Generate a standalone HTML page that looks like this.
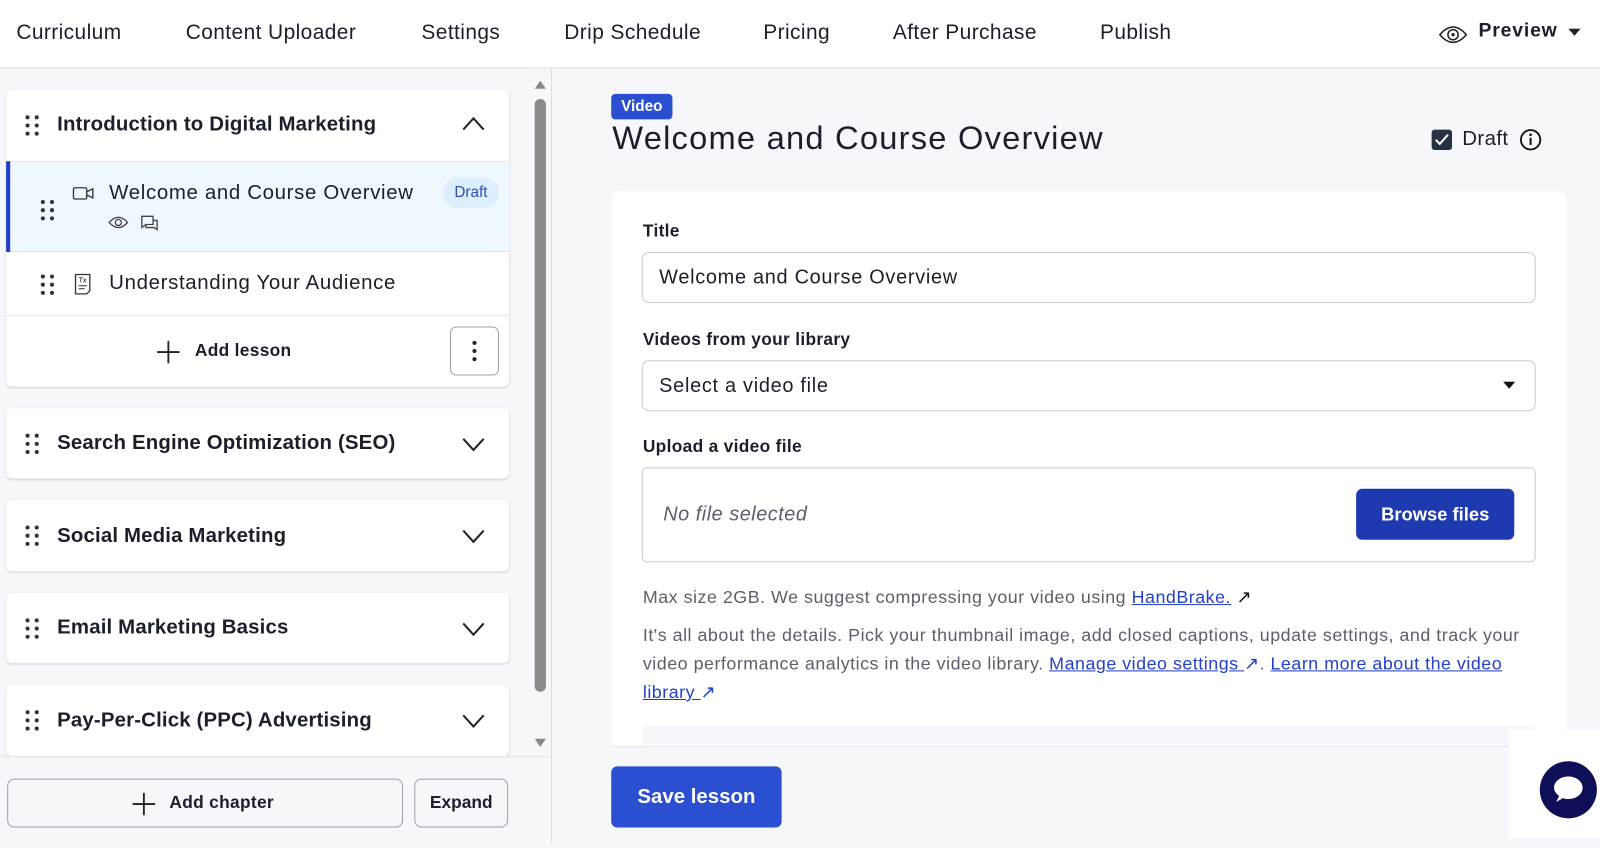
<!DOCTYPE html>
<html><head><meta charset="utf-8"><style>
*{box-sizing:border-box;margin:0;padding:0}
body{width:1600px;height:837px;overflow:hidden;background:#f6f7fb;font-family:"Liberation Sans",sans-serif;color:#1b1f2a;position:relative}
#w{position:absolute;left:0;top:0;width:1568px;height:821px;transform:scale(1.0204);transform-origin:0 0}
.a{position:absolute}
.nav{left:0;top:0;width:1568px;height:67px;background:#fff;border-bottom:1px solid #dcdde2}
.nav span{position:absolute;top:20px;font-size:20.5px;letter-spacing:.4px;color:#1b1f2a}
.card{position:absolute;left:6px;width:493px;background:#fff;border-radius:6px;box-shadow:0 1px 2px rgba(0,0,0,.15)}
.ch{font-size:20px;font-weight:bold;color:#1b1f2a;position:absolute;left:50px;letter-spacing:.15px}
.dots{position:absolute;width:14px;height:20px}
.dots i{position:absolute;width:4px;height:4px;background:#333;border-radius:50%}
.chev{position:absolute;right:24px}
.lbl{position:absolute;font-size:17px;font-weight:bold;color:#1b1f2a;left:30px;letter-spacing:.3px}
.inp{position:absolute;left:29px;width:876px;height:50px;border:1px solid #c9cbd1;border-radius:7px;font-size:19.5px;letter-spacing:.7px;padding:13px 16px;color:#1b1f2a}
.p{position:absolute;left:30px;font-size:17.5px;letter-spacing:.5px;color:#5b5f6b;line-height:28px;width:880px}
.p a{color:#2340c8;text-decoration:underline}
</style></head><body><div id="w">
<div class="a nav">
<span style="left:16px">Curriculum</span><span style="left:182px">Content Uploader</span><span style="left:413px">Settings</span><span style="left:553px">Drip Schedule</span><span style="left:748px">Pricing</span><span style="left:875px">After Purchase</span><span style="left:1078px">Publish</span>
<svg class="a" style="left:1410px;top:24px" width="28" height="20" viewBox="0 0 28 20"><path d="M1 10Q14-5 27 10Q14 25 1 10Z" fill="none" stroke="#222" stroke-width="1.5"/><circle cx="14" cy="10" r="5" fill="none" stroke="#222" stroke-width="1.5"/><circle cx="14" cy="10" r="1.6" fill="#222"/></svg>
<span style="left:1449px;font-weight:bold;font-size:19px;letter-spacing:.8px">Preview</span>
<svg class="a" style="left:1537px;top:28px" width="12" height="8"><path d="M0 0H12L6 7Z" fill="#222"/></svg>
</div>
<div class="a" style="left:540px;top:67px;width:1px;height:760px;background:#dcdde2"></div>
<div class="a" style="left:520px;top:67px;width:19px;height:674px;background:#f6f7fb"></div>
<svg class="a" style="left:523px;top:78px" width="13" height="10"><path d="M1 9H12L6.5 1Z" fill="#888"/></svg>
<div class="a" style="left:524px;top:97px;width:11px;height:581px;background:#8a8a8a;border-radius:6px"></div>
<svg class="a" style="left:523px;top:723px" width="13" height="10"><path d="M1 1H12L6.5 9Z" fill="#888"/></svg>

<div class="card" style="top:88px;height:291px">
 <div class="dots" style="left:19px;top:25px"><i style="left:0;top:0"></i><i style="left:9px;top:0"></i><i style="left:0;top:8px"></i><i style="left:9px;top:8px"></i><i style="left:0;top:16px"></i><i style="left:9px;top:16px"></i></div>
 <div class="ch" style="top:23px">Introduction to Digital Marketing</div>
 <svg class="chev" style="top:26px" width="22" height="14"><path d="M1 13L11 2L21 13" fill="none" stroke="#222" stroke-width="2"/></svg>
 <div class="a" style="left:0;top:70px;width:493px;height:89px;background:#f0f8ff;border-top:1px solid #e3e4e8;border-bottom:1px solid #dcdde2"></div>
 <div class="a" style="left:0;top:70px;width:4px;height:89px;background:#1f3fc4"></div>
 <div class="dots" style="left:34px;top:108px"><i style="left:0;top:0"></i><i style="left:9px;top:0"></i><i style="left:0;top:8px"></i><i style="left:9px;top:8px"></i><i style="left:0;top:16px"></i><i style="left:9px;top:16px"></i></div>
 <svg class="a" style="left:65px;top:95px" width="22" height="13"><rect x="1" y="1" width="13" height="11" rx="1.5" fill="none" stroke="#333" stroke-width="1.3"/><path d="M14 5L20 2V11L14 8" fill="none" stroke="#333" stroke-width="1.3"/></svg>
 <div class="a" style="left:101px;top:90px;font-size:20px;color:#1b1f2a;letter-spacing:.65px">Welcome and Course Overview</div>
 <div class="a" style="left:428px;top:86px;width:55px;height:30px;border-radius:15px;background:#ddeefe;color:#2a50b8;font-size:15px;text-align:center;line-height:30px">Draft</div>
 <svg class="a" style="left:100px;top:123px" width="20" height="14"><path d="M1 7Q10-3 19 7Q10 17 1 7Z" fill="none" stroke="#444" stroke-width="1.3"/><circle cx="10" cy="7" r="3" fill="none" stroke="#444" stroke-width="1.3"/></svg>
 <svg class="a" style="left:132px;top:123px" width="18" height="16"><path d="M1 1H12V9H5L1 12Z" fill="none" stroke="#444" stroke-width="1.3"/><path d="M12 5H16V14L13 12H5V9" fill="none" stroke="#444" stroke-width="1.3"/></svg>
 <div class="dots" style="left:34px;top:181px"><i style="left:0;top:0"></i><i style="left:9px;top:0"></i><i style="left:0;top:8px"></i><i style="left:9px;top:8px"></i><i style="left:0;top:16px"></i><i style="left:9px;top:16px"></i></div>
 <svg class="a" style="left:67px;top:180px" width="17" height="22"><path d="M1 1H15V17L12 20H1Z" fill="none" stroke="#333" stroke-width="1.3"/><text x="4" y="9" font-size="7" font-family="Liberation Sans">Tx</text><path d="M4 12H12M4 15H10" stroke="#333"/></svg>
 <div class="a" style="left:101px;top:178px;font-size:20px;color:#1b1f2a;letter-spacing:.65px">Understanding Your Audience</div>
 <div class="a" style="left:0;top:221px;width:493px;height:1px;background:#e3e4e8"></div>
 <svg class="a" style="left:147px;top:245px" width="24" height="24"><path d="M12 1V23M1 12H23" stroke="#222" stroke-width="1.8"/></svg>
 <div class="a" style="left:185px;top:246px;font-size:17px;font-weight:bold;letter-spacing:.3px">Add lesson</div>
 <div class="a" style="left:435px;top:232px;width:48px;height:48px;border:1px solid #a0a3aa;border-radius:6px"></div>
 <div class="a" style="left:457px;top:246px;width:4px;height:4px;border-radius:50%;background:#222;box-shadow:0 8px 0 #222,0 16px 0 #222"></div>
</div>

<div class="card" style="top:400px;height:69px"><div class="dots" style="left:19px;top:25px"><i style="left:0;top:0"></i><i style="left:9px;top:0"></i><i style="left:0;top:8px"></i><i style="left:9px;top:8px"></i><i style="left:0;top:16px"></i><i style="left:9px;top:16px"></i></div><div class="ch" style="top:23px">Search Engine Optimization (SEO)</div><svg class="chev" style="top:29px" width="22" height="14"><path d="M1 1L11 12L21 1" fill="none" stroke="#222" stroke-width="2"/></svg></div>
<div class="card" style="top:490px;height:70px"><div class="dots" style="left:19px;top:25px"><i style="left:0;top:0"></i><i style="left:9px;top:0"></i><i style="left:0;top:8px"></i><i style="left:9px;top:8px"></i><i style="left:0;top:16px"></i><i style="left:9px;top:16px"></i></div><div class="ch" style="top:24px">Social Media Marketing</div><svg class="chev" style="top:29px" width="22" height="14"><path d="M1 1L11 12L21 1" fill="none" stroke="#222" stroke-width="2"/></svg></div>
<div class="card" style="top:581px;height:69px"><div class="dots" style="left:19px;top:25px"><i style="left:0;top:0"></i><i style="left:9px;top:0"></i><i style="left:0;top:8px"></i><i style="left:9px;top:8px"></i><i style="left:0;top:16px"></i><i style="left:9px;top:16px"></i></div><div class="ch" style="top:23px">Email Marketing Basics</div><svg class="chev" style="top:29px" width="22" height="14"><path d="M1 1L11 12L21 1" fill="none" stroke="#222" stroke-width="2"/></svg></div>
<div class="card" style="top:671px;height:70px"><div class="dots" style="left:19px;top:25px"><i style="left:0;top:0"></i><i style="left:9px;top:0"></i><i style="left:0;top:8px"></i><i style="left:9px;top:8px"></i><i style="left:0;top:16px"></i><i style="left:9px;top:16px"></i></div><div class="ch" style="top:24px">Pay-Per-Click (PPC) Advertising</div><svg class="chev" style="top:29px" width="22" height="14"><path d="M1 1L11 12L21 1" fill="none" stroke="#222" stroke-width="2"/></svg></div>
<div class="a" style="left:0;top:741px;width:540px;height:90px;background:#f6f7fb;border-top:1px solid #e3e4e8"></div>
<div class="a" style="left:7px;top:763px;width:388px;height:48px;border:1px solid #a0a3aa;border-radius:7px"></div>
<svg class="a" style="left:129px;top:776px" width="24" height="24"><path d="M12 1V23M1 12H23" stroke="#222" stroke-width="1.8"/></svg>
<div class="a" style="left:166px;top:777px;font-size:17px;font-weight:bold;letter-spacing:.3px">Add chapter</div>
<div class="a" style="left:406px;top:763px;width:92px;height:48px;border:1px solid #a0a3aa;border-radius:7px;font-size:17px;font-weight:bold;text-align:center;line-height:46px">Expand</div>

<div class="a" style="left:599px;top:92px;width:60px;height:25px;background:#2a4fd0;border-radius:4px;color:#fff;font-weight:bold;font-size:15px;text-align:center;line-height:25px">Video</div>
<div class="a" style="left:600px;top:117px;font-size:32px;color:#1b1f2a;letter-spacing:1.2px">Welcome and Course Overview</div>
<div class="a" style="left:1403px;top:127px;width:20px;height:20px;background:#263241;border-radius:3px"></div>
<svg class="a" style="left:1406px;top:131px" width="14" height="12"><path d="M1 6L5 10L13 1" fill="none" stroke="#fff" stroke-width="2"/></svg>
<div class="a" style="left:1433px;top:125px;font-size:20px;color:#1b1f2a;letter-spacing:.4px">Draft</div>
<svg class="a" style="left:1489px;top:126px" width="22" height="22"><circle cx="11" cy="11" r="9.5" fill="none" stroke="#111" stroke-width="1.8"/><path d="M11 9V16" stroke="#111" stroke-width="2"/><circle cx="11" cy="6" r="1.3" fill="#111"/></svg>

<div class="a" style="left:600px;top:187px;width:935px;height:545px;background:#fff;border-radius:8px 8px 0 0;border-bottom:1px solid #e3e4e8;overflow:hidden">
 <div class="lbl" style="top:30px">Title</div>
 <div class="inp" style="top:60px">Welcome and Course Overview</div>
 <div class="lbl" style="top:136px">Videos from your library</div>
 <div class="inp" style="top:166px">Select a video file</div>
 <svg class="a" style="left:873px;top:187px" width="12" height="8"><path d="M0 0H12L6 7Z" fill="#111"/></svg>
 <div class="lbl" style="top:241px">Upload a video file</div>
 <div class="a" style="left:29px;top:271px;width:876px;height:93px;border:1px solid #c9cbd1;border-radius:5px"></div>
 <div class="a" style="left:50px;top:306px;font-size:19.5px;letter-spacing:.5px;font-style:italic;color:#5b5f6b">No file selected</div>
 <div class="a" style="left:729px;top:292px;width:155px;height:50px;background:#1e3ab0;border-radius:6px;color:#fff;font-weight:bold;font-size:18px;text-align:center;line-height:50px">Browse files</div>
 <div class="p" style="top:384px">Max size 2GB. We suggest compressing your video using <a>HandBrake.</a> <span style="color:#111">↗</span></div>
 <div class="p" style="top:421px">It's all about the details. Pick your thumbnail image, add closed captions, update settings, and track your video performance analytics in the video library. <a>Manage video settings </a> <span style="color:#2340c8">↗</span>. <a>Learn more about the video library </a> <span style="color:#2340c8">↗</span></div>
 <div class="a" style="left:30px;top:524px;width:876px;height:30px;background:#f6f7fb;border-radius:6px"></div>
</div>
<div class="a" style="left:599px;top:751px;width:167px;height:60px;background:#2a4fd0;border-radius:6px;color:#fff;font-weight:bold;font-size:20px;text-align:center;line-height:60px">Save lesson</div>
<div class="a" style="left:1479px;top:715px;width:89px;height:106px;background:#fff"></div>
<div class="a" style="left:1509px;top:746px;width:56px;height:56px;border-radius:50%;background:#0f0e58"></div>
<svg class="a" style="left:1520px;top:757px" width="34" height="34"><path d="M17 4C25 4 31 9 31 15S25 26 17 26C15 26 13 26 12 25L5 29L8 23C5 21 3 18 3 15C3 9 9 4 17 4Z" fill="#fff"/></svg>
</div></body></html>
